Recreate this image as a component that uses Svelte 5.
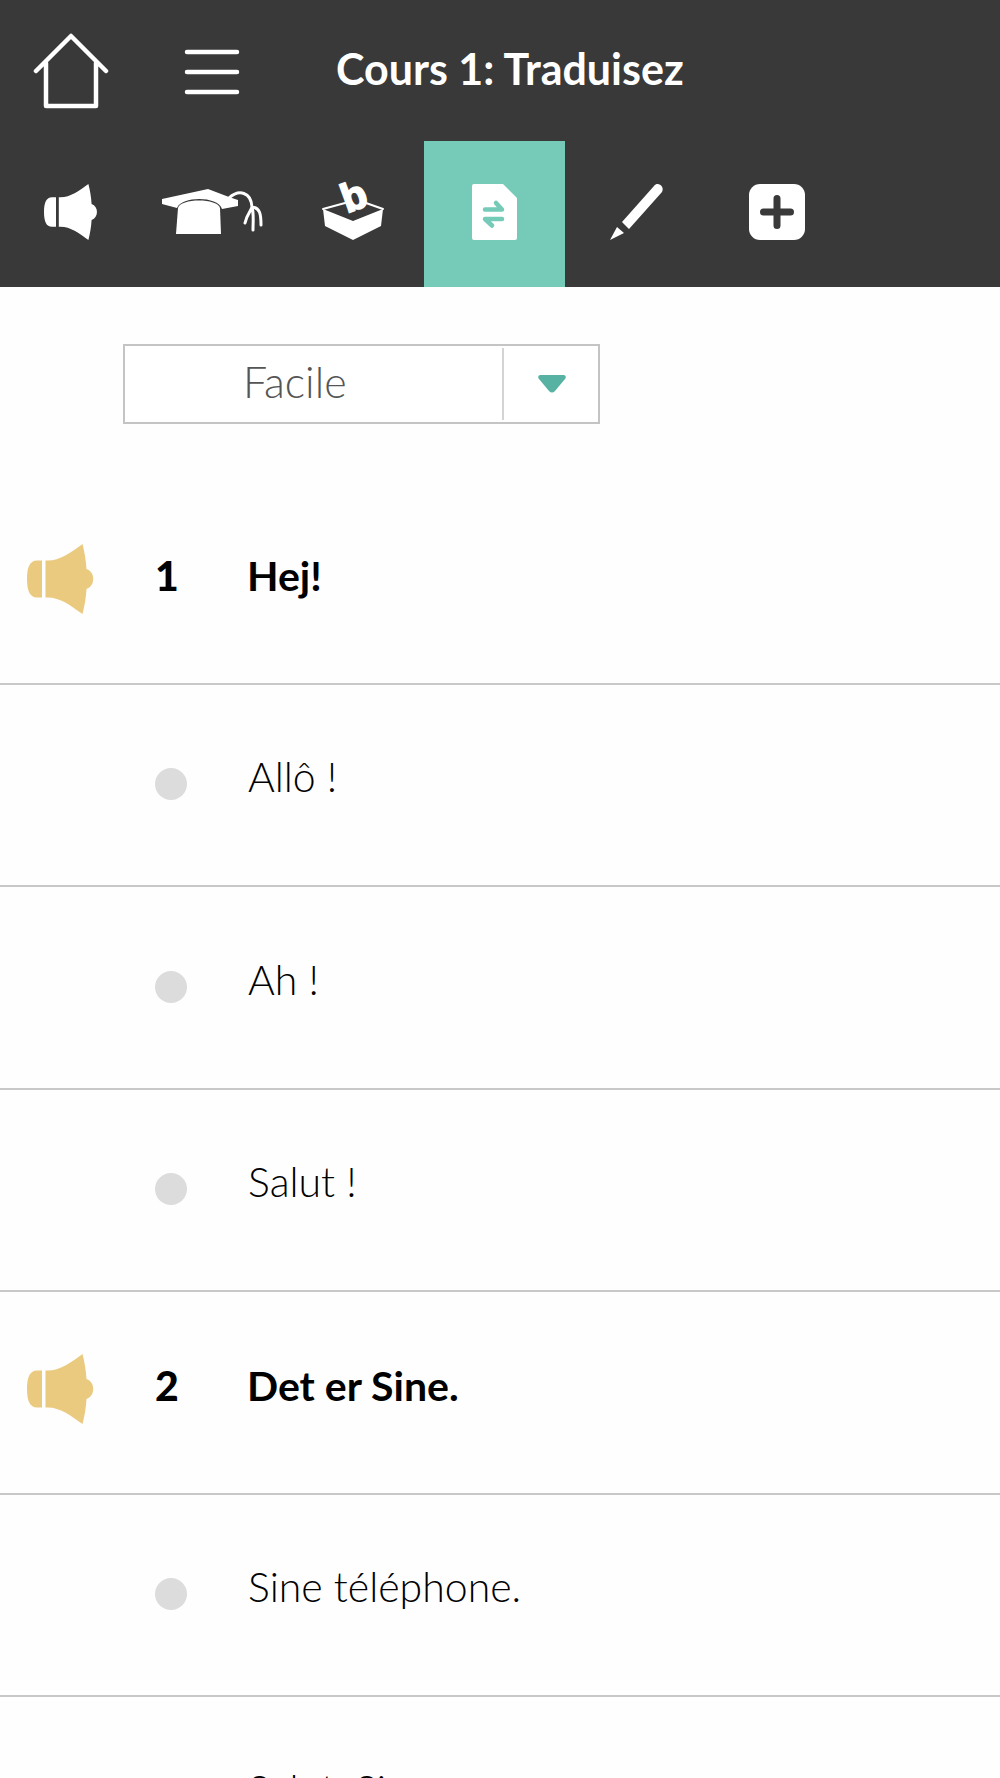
<script lang="ts">
	type Tab = { id: string; label: string };
	type Question = { id: number; text: string; answers: string[] };

	const tabs: Tab[] = [
		{ id: 'listen', label: 'Écouter' },
		{ id: 'learn', label: 'Apprendre' },
		{ id: 'letters', label: 'Lettres' },
		{ id: 'translate', label: 'Traduisez' },
		{ id: 'write', label: 'Écrire' },
		{ id: 'more', label: 'Plus' }
	];

	const questions: Question[] = [
		{ id: 1, text: 'Hej!', answers: ['Allô !', 'Ah !', 'Salut !'] },
		{ id: 2, text: 'Det er Sine.', answers: ['Sine téléphone.', 'Salut, Sine.'] }
	];

	let activeTab = $state('translate');
	let level = $state('Facile');
	let chosen = $state<Record<number, string>>({});
</script>

{#snippet horn()}
	<path
		d="M15 16.5H10C3 16.5 0 23 0 35S3 53.500 10 53.500h5zM18.500 16.500C32 17.500 43 9 55.500 0c2 8 3.500 16 4 25 9 3 9 17 0 20-.5 9-2 17-4 25C43 61 32 52.500 18.500 53.500z"
	/>
{/snippet}

<div class="app">
	<header>
		<div class="bar">
			<button class="cell" aria-label="Accueil">
				<svg class="home" viewBox="0 0 76 78">
					<path d="M3 39 38 4l35 35M13 31v43h50V31" />
				</svg>
			</button>
			<button class="cell" aria-label="Menu">
				<svg class="menu" viewBox="0 0 56 48">
					<path d="M3 5h50M3 25h50M3 45h50" />
				</svg>
			</button>
			<h1>Cours 1: Traduisez</h1>
		</div>

		<nav>
			{#each tabs as tab}
				<button
					class={'tab' + (activeTab === tab.id ? ' active' : '')}
					aria-label={tab.label}
					onclick={() => (activeTab = tab.id)}
				>
					{#if tab.id === 'listen'}
						<svg width="56" height="56" viewBox="0 0 70 70">{@render horn()}</svg>
					{:else if tab.id === 'learn'}
						<svg width="102" height="58" viewBox="1 0 102 58">
							<path d="M1 16 47 6l21 8 9 3v6l-16 3c-4-13-40-13-45-1L1 21z" />
							<path d="M17 25c2-10 40-10 42 0l1 26H15z" />
							<path
								class="tassel"
								d="M68 15c10-9 22-6 23 9M91 24c-2 6-5 7-7 16M91 24c2 7 1 14 1 23M91 24c8 1 9 7 9 18"
							/>
						</svg>
					{:else if tab.id === 'letters'}
						<svg width="62" height="58" viewBox="1 1 62 58">
							<path d="m1 27 30 12 30-12-2 17-28 14L3 44z" />
							<path class="rim" d="m1 27 22-6M44 21l17 6" />
							<text x="25" y="31" transform="rotate(-20 25 31)">b</text>
						</svg>
					{:else if tab.id === 'translate'}
						<svg width="46" height="56" viewBox="0 0 46 56">
							<path d="M2 0h29l14 14v40q0 2-2 2H2q-2 0-2-2V2q0-2 2-2z" />
							<path class="arrows" d="M13 25.500h17L24 19M30 35H13l7 6.500" />
						</svg>
					{:else if tab.id === 'write'}
						<svg width="54" height="58" viewBox="0 0 54 58">
							<path d="M13 39 45 3c4-5 11 1 8 6L20 46zM8 44l7 6L1 57z" />
						</svg>
					{:else}
						<svg width="56" height="56" viewBox="0 0 56 56">
							<rect width="56" height="56" rx="11" />
							<path class="plus" d="M28 14.500v27M14.500 28h27" />
						</svg>
					{/if}
				</button>
			{/each}
		</nav>
	</header>

	<main>
		<div class="level">
			<select bind:value={level} aria-label="Niveau">
				<option>Facile</option>
				<option>Moyen</option>
				<option>Difficile</option>
			</select>
			<span class="arrow">
				<svg width="28" height="18" viewBox="0 0 28 18">
					<path d="M2 0h24q3 1 1 4L17 16q-3 3-6 0L1 4Q-1 1 2 0z" />
				</svg>
			</span>
		</div>

		{#each questions as question}
			<section>
				<div class="row question">
					<button class="play" aria-label="Écouter la phrase">
						<svg width="70" height="70" viewBox="0 0 70 70">{@render horn()}</svg>
					</button>
					<span class="number">{question.id}</span>
					<h2>{question.text}</h2>
				</div>
				{#each question.answers as answer}
					<label class="row answer">
						<input
							type="radio"
							name={'question-' + question.id}
							value={answer}
							bind:group={chosen[question.id]}
						/>
						<span>{answer}</span>
					</label>
				{/each}
			</section>
		{/each}
	</main>
</div>

<style>
	:global(body) {
		background: #fefefe;
	}

	.app {
		height: 100vh;
		display: flex;
		flex-direction: column;
		overflow: hidden;
		font-family: Lato, 'Open Sans', sans-serif;
		color: #000;
	}

	button {
		padding: 0;
		border: 0;
		background: none;
		cursor: pointer;
	}

	svg {
		display: block;
	}

	/* header */

	header {
		flex: none;
		background: #393939;
	}

	.bar {
		display: flex;
		align-items: center;
		height: 141px;
	}

	.cell {
		display: flex;
		justify-content: center;
		width: 141px;
	}

	.home,
	.menu {
		fill: none;
		stroke: #fff;
		stroke-width: 4.5;
		stroke-linecap: round;
		stroke-linejoin: round;
	}

	.home {
		width: 76px;
	}

	.menu {
		width: 56px;
	}

	h1 {
		margin: 0;
		padding: 0 0 4px 54px;
		font-size: 43px;
		line-height: 48px;
		font-weight: 700;
		color: #fff;
	}

	nav {
		display: flex;
		padding-left: 1px;
	}

	.tab {
		display: flex;
		align-items: center;
		justify-content: center;
		width: 141px;
		height: 146px;
		padding-bottom: 4px;
	}

	.tab.active {
		background: #76cab8;
	}

	.tab svg {
		fill: #fff;
		overflow: visible;
	}

	.tab .tassel,
	.tab .rim,
	.tab .arrows,
	.tab .plus {
		fill: none;
		stroke: #fff;
		stroke-width: 3;
		stroke-linecap: round;
	}

	.tab .rim {
		stroke-width: 2;
	}

	.tab .arrows {
		stroke: #76cab8;
		stroke-width: 4.5;
		stroke-linejoin: round;
	}

	.tab .plus {
		stroke: #393939;
		stroke-width: 7;
	}

	.tab text {
		font-size: 40px;
		font-weight: 900;
		stroke: #fff;
		stroke-width: 2;
	}

	/* content */

	main {
		flex: 1;
		min-height: 0;
		overflow-y: auto;
		scrollbar-width: none;
	}

	.level {
		display: grid;
		grid-template-columns: 1fr 98px;
		width: 477px;
		height: 80px;
		margin: 57px 0 58px 123px;
	}

	select {
		grid-area: 1 / 1 / 2 / 3;
		appearance: none;
		padding: 0 100px 6px 118px;
		border: 2px solid #c4c4c4;
		border-radius: 0;
		background: #fff;
		font-family: inherit;
		font-size: 43px;
		font-weight: 300;
		color: #555;
	}

	.arrow {
		grid-area: 1 / 2;
		display: flex;
		align-items: center;
		justify-content: center;
		margin: 4px 0;
		border-left: 2px solid #d4d4d4;
		pointer-events: none;
	}

	.arrow svg {
		fill: #58b2a3;
	}

	.row {
		display: grid;
		grid-template-columns: 155px 92px 1fr;
		align-items: center;
		box-sizing: border-box;
		min-height: 202px;
		padding-bottom: 14px;
		border-bottom: 2px solid #c8c8c8;
		font-size: 41px;
		line-height: 48px;
	}

	.row:nth-child(odd) {
		min-height: 203px;
	}

	.question {
		font-weight: 700;
	}

	.play {
		justify-self: start;
		margin: 6px 0 0 27px;
	}

	.play svg {
		fill: #eaca7f;
	}

	.number {
		font-weight: 900;
	}

	h2 {
		margin: 0;
		font-size: inherit;
		font-weight: inherit;
	}

	.answer {
		padding-bottom: 16px;
		font-weight: 300;
	}

	.answer span {
		padding-left: 1px;
	}

	input {
		grid-column: 2;
		appearance: none;
		width: 32px;
		height: 32px;
		margin: 14px 0 0;
		border-radius: 50%;
		background: #dcdcdc;
	}

	input:checked {
		background: #76cab8;
	}
</style>
